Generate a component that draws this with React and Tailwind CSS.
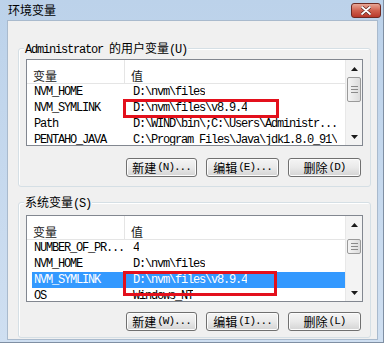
import React from 'react';

// Win7 "环境变量" dialog
const userVars = [
  { name: 'NVM_HOME', value: 'D:\\nvm\\files' },
  { name: 'NVM_SYMLINK', value: 'D:\\nvm\\files\\v8.9.4' },
  { name: 'Path', value: 'D:\\WIND\\bin\\;C:\\Users\\Administr...' },
  { name: 'PENTAHO_JAVA', value: 'C:\\Program Files\\Java\\jdk1.8.0_91\\' },
];

const sysVars = [
  { name: 'NUMBER_OF_PR...', value: '4' },
  { name: 'NVM_HOME', value: 'D:\\nvm\\files' },
  { name: 'NVM_SYMLINK', value: 'D:\\nvm\\files\\v8.9.4', selected: true },
  { name: 'OS', value: 'Windows_NT' },
];

const Cjk = ({ children }) => (
  <span className="text-[12px] tracking-normal font-['Noto_Sans_CJK_SC',sans-serif]">{children}</span>
);

const Arrow = ({ up }) => (
  <svg width="7" height="4" viewBox="0 0 7 4">
    <path d={up ? 'M0 4 L3.5 0 L7 4 Z' : 'M0 0 L3.5 4 L7 0 Z'} fill="#1a1a1a" />
  </svg>
);

const ScrollBar = ({ thumbTop, thumbHeight }) => (
  <div className="w-[17px] h-full flex flex-col bg-[#f3f3f3] border-l border-[#e8e8e8]">
    <div className="h-[17px] flex items-center justify-center">
      <Arrow up />
    </div>
    <div className="flex-1 flex flex-col">
      <div style={{ height: thumbTop }} />
      <div
        className="mx-[1px] rounded-[2px] border border-[#9a9a9a] bg-linear-to-r from-[#f4f4f4] to-[#dcdcdc] flex flex-col items-center justify-center gap-[2px]"
        style={{ height: thumbHeight }}
      >
        <div className="w-[7px] h-[1px] bg-[#8a8a8a]" />
        <div className="w-[7px] h-[1px] bg-[#8a8a8a]" />
        <div className="w-[7px] h-[1px] bg-[#8a8a8a]" />
      </div>
    </div>
    <div className="h-[17px] flex items-center justify-center">
      <Arrow />
    </div>
  </div>
);

const VarList = ({ rows, thumbTop, thumbHeight, mark }) => (
  <div className="relative w-[337px] h-[87px] border border-[#828790] bg-white flex overflow-hidden">
    <div className="flex-1 flex flex-col min-w-0">
      {/* header */}
      <div className="h-[24px] flex border-b border-[#e5e5e5] text-[#1a1a1a]">
        <div className="w-[98px] pl-[6px] pt-[3px] border-r border-[#e5e5e5]">
          <Cjk>变量</Cjk>
        </div>
        <div className="pl-[6px] pt-[3px]">
          <Cjk>值</Cjk>
        </div>
      </div>
      {rows.map((r) => (
        <div key={r.name} className="h-[16px] flex pl-[5px] text-[12px] leading-[16px] tracking-[-1.2px] font-['Liberation_Mono',monospace] whitespace-nowrap">
          <div className={`flex-1 flex min-w-0 ${r.selected ? 'bg-[#3399ff] text-white' : 'text-black'}`}>
            <div className="w-[94px] pl-[2px] overflow-hidden">{r.name}</div>
            <div className="pl-[7px] overflow-hidden">{r.value}</div>
          </div>
        </div>
      ))}
    </div>
    <ScrollBar thumbTop={thumbTop} thumbHeight={thumbHeight} />
    {/* red annotation box */}
    <div
      className="absolute border-[3px] border-[#e3101c]"
      style={{ left: mark.left, top: mark.top, width: mark.width, height: mark.height }}
    />
  </div>
);

const Btn = ({ label, keyName, dots, w }) => (
  <div
    className="h-[19px] flex items-center justify-center rounded-[3px] border border-[#707070] bg-linear-to-b from-[#f5f5f5] via-[#e9e9e9] to-[#d4d4d4] text-black shadow-[inset_0_0_0_1px_#fcfcfc]"
    style={{ width: w }}
  >
    <Cjk>{label}</Cjk>
    <span className="text-[11px] tracking-[-1px] font-['Liberation_Mono',monospace] pl-[1px]">
      ({keyName}){dots ? '...' : ''}
    </span>
  </div>
);

const Group = ({ title, children, className }) => (
  <div className={`relative w-[353px] border border-[#d5dfe5] rounded-[3px] shadow-[inset_1px_1px_0_#ffffff] ${className}`}>
    <span className="absolute -top-[9px] left-[5px] px-[1px] bg-[#f0f0f0] leading-[16px] text-[12px] tracking-[-1.2px] font-['Liberation_Mono',monospace] text-black whitespace-nowrap">
      {title}
    </span>
    {children}
  </div>
);

export default function App() {
  return (
    <div className="w-[388px] h-[344px] bg-white overflow-hidden">
      <div className="w-[384px] h-[343px] bg-linear-to-b from-[#bcd2ea] to-[#cfdff1] border-r border-b border-[#7f8fa3] flex flex-col">
        {/* title bar */}
        <div className="h-[20px] flex justify-between items-start pl-[8px] pr-[2px]">
          <span className="mt-[2px] text-[12px] leading-[16px] text-black font-['Noto_Sans_CJK_SC',sans-serif]">环境变量</span>
          <div className="mt-[3px] w-[30px] h-[15px] rounded-[3px] border border-[#6e2a22] bg-linear-to-b from-[#e8a696] via-[#d0614f] to-[#b8382a] flex items-center justify-center">
            <svg width="10" height="9" viewBox="0 0 10 9">
              <path d="M1 1 L9 8 M9 1 L1 8" stroke="#5a1f18" strokeWidth="3.2" strokeLinecap="round" />
              <path d="M1 1 L9 8 M9 1 L1 8" stroke="#ffffff" strokeWidth="1.8" strokeLinecap="round" />
            </svg>
          </div>
        </div>

        {/* client area */}
        <div className="ml-[7px] w-[371px] h-[320px] bg-[#f0f0f0] border border-[#a9bacd] flex flex-col pl-[10px]">
          <Group title={<>Administrator <Cjk>的用户变量</Cjk>(U)</>} className="mt-[27px] h-[139px]">
            <div className="pl-[7px] pt-[10px]">
              <VarList
                rows={userVars}
                thumbTop={0}
                thumbHeight={25}
                mark={{ left: 96, top: 39, width: 156, height: 19 }}
              />
            </div>
            <div className="flex justify-end gap-[9px] pr-[9px] mt-[12px]">
              <Btn label="新建" keyName="N" dots w={71} />
              <Btn label="编辑" keyName="E" dots w={73} />
              <Btn label="删除" keyName="D" w={73} />
            </div>
          </Group>

          <Group title={<><Cjk>系统变量</Cjk>(S)</>} className="mt-[15px] h-[136px]">
            <div className="pl-[7px] pt-[12px]">
              <VarList
                rows={sysVars}
                thumbTop={6}
                thumbHeight={15}
                mark={{ left: 96, top: 55, width: 154, height: 25 }}
              />
            </div>
            <div className="flex justify-end gap-[9px] pr-[9px] mt-[10px]">
              <Btn label="新建" keyName="W" dots w={71} />
              <Btn label="编辑" keyName="I" dots w={73} />
              <Btn label="删除" keyName="L" w={73} />
            </div>
          </Group>
        </div>
      </div>
    </div>
  );
}
